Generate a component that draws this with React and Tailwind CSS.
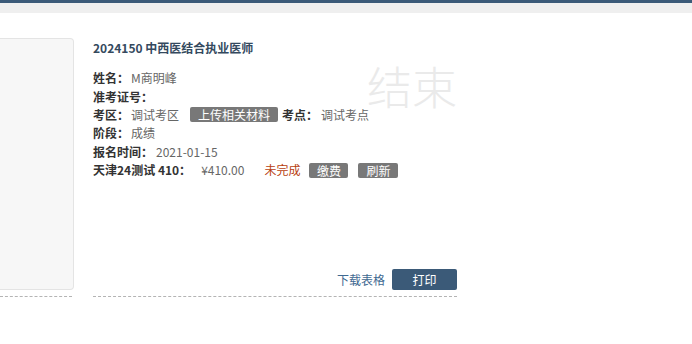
import React from 'react';

const font = { fontFamily: '"Microsoft YaHei", "Noto Sans CJK SC", "Liberation Sans", sans-serif' };

const Row = ({ label, children }) => (
  <div className="flex items-center h-[18.4px] text-[12px] leading-[18px]">
    <span className="font-bold text-[#333]">{label}</span>
    {children}
  </div>
);

const GrayBtn = ({ children, className = '' }) => (
  <span
    className={`inline-flex items-center justify-center h-[15px] bg-[#787878] text-white text-[12px] leading-[15px] rounded-[2px] ${className}`}
  >
    {children}
  </span>
);

export default function App() {
  return (
    <div className="w-[692px] h-[344px] bg-white overflow-hidden relative" style={font}>
      {/* top bars */}
      <div className="h-[3px] bg-[#3b5a78]" />
      <div className="h-[10px] bg-[#efefef]" />

      <div className="flex mt-[25px]">
        {/* left card */}
        <div className="w-[74px] flex flex-col">
          <div className="h-[252px] bg-[#f7f7f7] border border-l-0 border-[#e4e4e4] rounded-r-[4px]" />
          <div className="mt-[6px] w-[72px] border-b border-dashed border-[#b4b4b4]" />
        </div>

        {/* right panel */}
        <div className="ml-[19px] w-[364px] h-[259px] flex flex-col border-b border-dashed border-[#b4b4b4] relative">
          <div className="text-[12px] font-bold text-[#34495e] leading-[20px]">
            2024150 中西医结合执业医师
          </div>

          <div className="mt-[11px] flex flex-col">
            <Row label="姓名：">
              <span className="text-[#666] ml-[2px]">M商明峰</span>
            </Row>
            <Row label="准考证号：" />
            <Row label="考区：">
              <span className="text-[#666] ml-[2px]">调试考区</span>
              <GrayBtn className="ml-[11px] w-[88px]">上传相关材料</GrayBtn>
              <span className="font-bold text-[#333] ml-[4px]">考点：</span>
              <span className="text-[#666] ml-[3px]">调试考点</span>
            </Row>
            <Row label="阶段：">
              <span className="text-[#666] ml-[2px]">成绩</span>
            </Row>
            <Row label="报名时间：">
              <span className="text-[#666] ml-[3px]">2021-01-15</span>
            </Row>
            <Row label="天津24测试 410：">
              <span className="text-[#666] ml-[10px]">¥410.00</span>
              <span className="text-[#b8400f] ml-[20px]">未完成</span>
              <GrayBtn className="ml-[9px] w-[39px]">缴费</GrayBtn>
              <GrayBtn className="ml-[10px] w-[40px]">刷新</GrayBtn>
            </Row>
          </div>

          <div className="mt-auto mb-[6px] flex items-center justify-end">
            <span className="text-[12px] text-[#3f6991] mr-[7px]">下载表格</span>
            <span className="inline-flex items-center justify-center w-[65px] h-[21px] bg-[#3b5a78] text-white text-[12px] rounded-[2px]">
              打印
            </span>
          </div>

          {/* watermark */}
          <div className="absolute left-[274px] top-[21px] text-[45px] leading-[54px] font-light text-[#eaeaea] select-none">
            结束
          </div>
        </div>
      </div>
    </div>
  );
}
